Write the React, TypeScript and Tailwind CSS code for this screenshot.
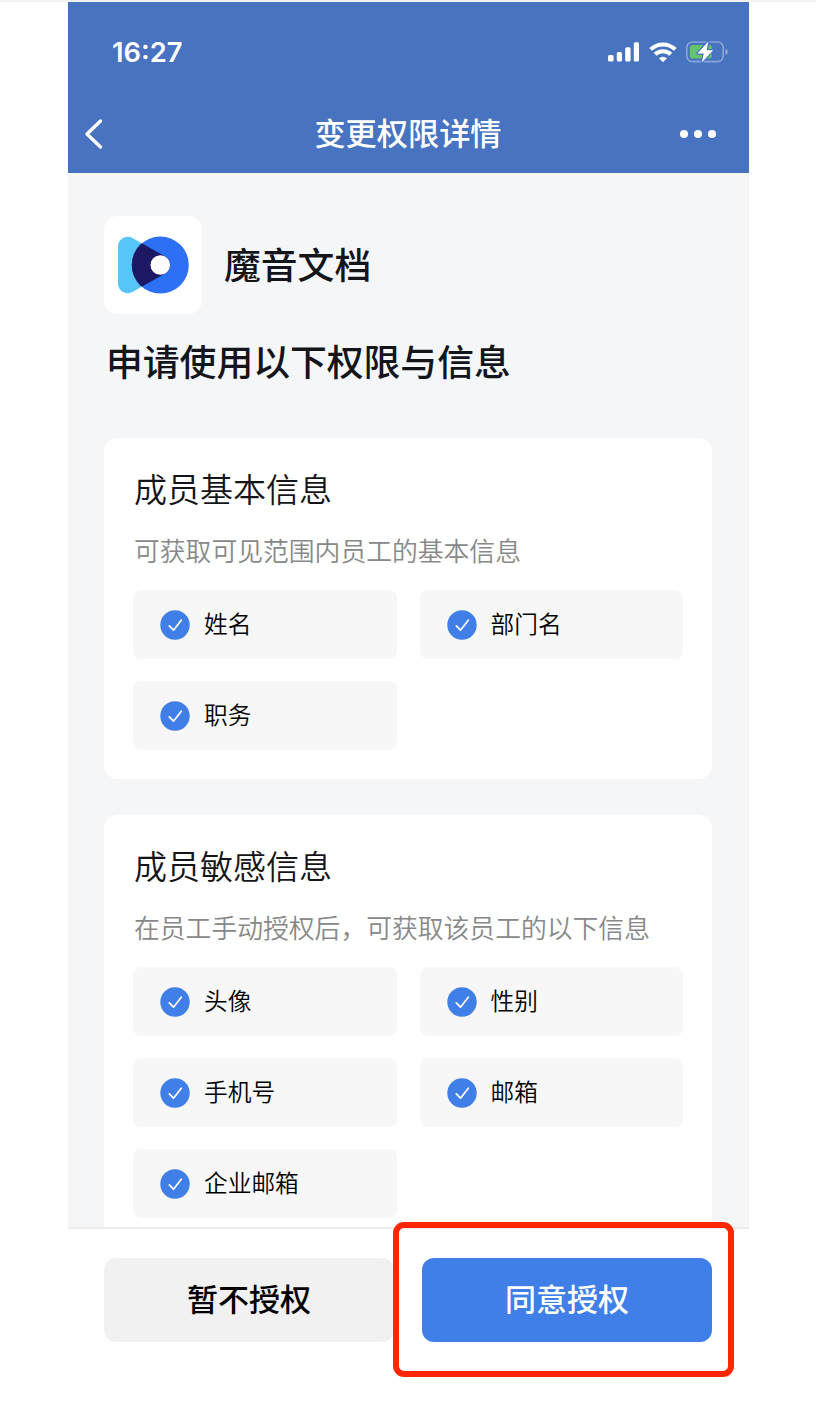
import type { ReactNode } from "react";

type PermissionGroup = {
  title: string;
  description: string;
  items: string[];
};

const GROUPS: PermissionGroup[] = [
  {
    title: "成员基本信息",
    description: "可获取可见范围内员工的基本信息",
    items: ["姓名", "部门名", "职务"],
  },
  {
    title: "成员敏感信息",
    description: "在员工手动授权后，可获取该员工的以下信息",
    items: ["头像", "性别", "手机号", "邮箱", "企业邮箱"],
  },
];

export default function App() {
  return (
    <div className="h-[1414px] w-[816px] overflow-hidden border-t-2 border-[#f0f1f2] bg-white font-['Noto_Sans_CJK_SC',sans-serif]">
      <div className="ml-[68px] flex h-[1412px] w-[681px] flex-col">
        <header className="h-[171px] shrink-0 bg-[#4773c0] text-white">
          <StatusBar />
          <NavBar title="变更权限详情" />
        </header>

        <main className="h-[1054px] shrink-0 overflow-hidden bg-[#f4f6f8] pt-[43px] pr-[37px] pl-9">
          <div className="flex items-center gap-[22px]">
            <div className="flex h-[98px] w-[98px] items-center justify-center rounded-[14px] bg-white">
              <AppLogo />
            </div>
            <h1 className="-mt-[5px] text-[36.8px] leading-[50px] font-medium text-[#14151a]">魔音文档</h1>
          </div>
          <h2 className="mt-[21px] ml-0.5 text-[36.8px] leading-[50px] font-medium text-[#14151a]">
            申请使用以下权限与信息
          </h2>
          <div className="mt-[53px] flex flex-col gap-9">
            {GROUPS.map((group) => (
              <PermissionCard key={group.title} group={group} />
            ))}
          </div>
        </main>

        <footer className="relative flex grow gap-7 border-t-2 border-[#ebecee] bg-white pt-[29px] pr-[37px] pl-9">
          <ActionButton className="bg-[#f1f1f1] text-black">暂不授权</ActionButton>
          <ActionButton className="bg-[#407fe8] text-white">同意授权</ActionButton>
          <div className="pointer-events-none absolute -top-[7px] left-[325px] h-[155px] w-[341px] rounded-[11px] border-[6px] border-[#ff2600]" />
        </footer>
      </div>
    </div>
  );
}

function StatusBar() {
  return (
    <div className="flex h-[100px] items-center justify-between pr-[21px] pl-11">
      <span className="pt-0.5 font-['Inter',sans-serif] text-[27.3px] font-semibold">16:27</span>
      <div className="flex items-center gap-[9.5px]">
        <SignalIcon />
        <WifiIcon />
        <BatteryIcon />
      </div>
    </div>
  );
}

function NavBar({ title }: { title: string }) {
  return (
    <div className="grid h-16 grid-cols-[1fr_auto_1fr] items-center pr-[33px] pl-4">
      <svg width="20" height="32" viewBox="0 0 20 32" fill="none" aria-hidden>
        <path d="M16.5 3 3 16l13.5 13" stroke="currentColor" strokeWidth="3.4" strokeLinecap="round" strokeLinejoin="round" />
      </svg>
      <span className="-mt-[5px] ml-4 text-[31.2px] leading-[44px] font-medium">{title}</span>
      <div className="flex justify-end gap-1.5">
        <span className="h-2 w-2 rounded-full bg-white" />
        <span className="h-2 w-2 rounded-full bg-white" />
        <span className="h-2 w-2 rounded-full bg-white" />
      </div>
    </div>
  );
}

function PermissionCard({ group }: { group: PermissionGroup }) {
  return (
    <section className="rounded-[14px] bg-white px-[29px] pt-[27px] pb-[29px]">
      <h3 className="ml-px text-[33px] leading-[46px] font-[350] text-[#14151a]">{group.title}</h3>
      <p className="mt-[21px] ml-px text-[25.8px] leading-9 font-[350] text-[#888888]">{group.description}</p>
      <ul className="mt-[22px] grid grid-cols-2 gap-x-[23px] gap-y-[22px]">
        {group.items.map((item) => (
          <li key={item} className="flex h-[69px] items-center gap-3.5 rounded-lg bg-[#f7f7f7] pl-[27px]">
            <CheckBadge />
            <span className="-mt-[3px] text-[23.7px] leading-8 font-[350] text-black">{item}</span>
          </li>
        ))}
      </ul>
    </section>
  );
}

function ActionButton({ className, children }: { className: string; children: ReactNode }) {
  return (
    <button
      type="button"
      className={`flex h-[84px] flex-1 items-center justify-center rounded-xl pb-1 text-[31px] leading-[44px] font-medium ${className}`}
    >
      {children}
    </button>
  );
}

function CheckBadge() {
  return (
    <svg width="30" height="30" viewBox="0 0 30 30" fill="none" aria-hidden>
      <circle cx="15" cy="15" r="14.7" fill="#407fe8" />
      <path d="m9.3 15.8 4.2 4.4 7.8-10" stroke="#fff" strokeWidth="1.7" strokeLinecap="round" strokeLinejoin="round" />
    </svg>
  );
}

function AppLogo() {
  return (
    <svg width="98" height="98" viewBox="0 0 98 98" aria-hidden>
      <defs>
        <clipPath id="ring">
          <circle cx="56.3" cy="49" r="28.5" />
        </clipPath>
        <path id="play" d="M14 30.5A9.8 9.8 0 0 1 28.8 22.2L61.1 40.4A9.8 9.8 0 0 1 61.1 57.6L28.8 75.8A9.8 9.8 0 0 1 14 67.5Z" />
      </defs>
      <use href="#play" fill="#56c5f7" />
      <circle cx="56.3" cy="49" r="28.5" fill="#2e70f5" />
      <use href="#play" fill="#1c1863" clipPath="url(#ring)" />
      <circle cx="56.3" cy="49" r="9.8" fill="#fff" />
    </svg>
  );
}

function SignalIcon() {
  return (
    <svg width="31" height="20" viewBox="0 0 31 20" fill="currentColor" aria-hidden>
      <rect x="0" y="13" width="5.6" height="6.4" rx="1.5" />
      <rect x="8.8" y="10" width="5.2" height="9.4" rx="1.5" />
      <rect x="17.2" y="5.2" width="5.4" height="14.2" rx="1.5" />
      <rect x="25.8" y="0.2" width="5.2" height="19.2" rx="1.5" />
    </svg>
  );
}

function WifiIcon() {
  return (
    <svg width="28" height="20" viewBox="0 0 28 20" fill="none" stroke="currentColor" strokeWidth="4" aria-hidden>
      <path d="M1.7 7.4a17.6 17.6 0 0 1 24.6 0" />
      <path d="M6.2 12.3a11.2 11.2 0 0 1 15.6 0" />
      <path d="M10 16.2a6 6 0 0 1 8 0L14 20.2Z" fill="currentColor" stroke="none" />
    </svg>
  );
}

function BatteryIcon() {
  return (
    <svg width="42" height="22" viewBox="0 0 42 22" fill="none" aria-hidden>
      <rect x="0.8" y="1" width="36.4" height="19.6" rx="5.5" stroke="#8aa6d8" strokeWidth="1.6" />
      <path d="M39.6 7.8c2.6 1 2.6 5.2 0 6.2Z" fill="#9db5df" />
      <rect x="3.8" y="4" width="22" height="13.6" rx="2.8" fill="#65c466" />
      <path
        d="M22.4.4 11.4 12.6h6.4L15.8 21.4 27.2 9.2h-6.6Z"
        fill="#fff"
        stroke="#4773c0"
        strokeWidth="2.4"
        strokeLinejoin="round"
        paintOrder="stroke"
      />
    </svg>
  );
}
